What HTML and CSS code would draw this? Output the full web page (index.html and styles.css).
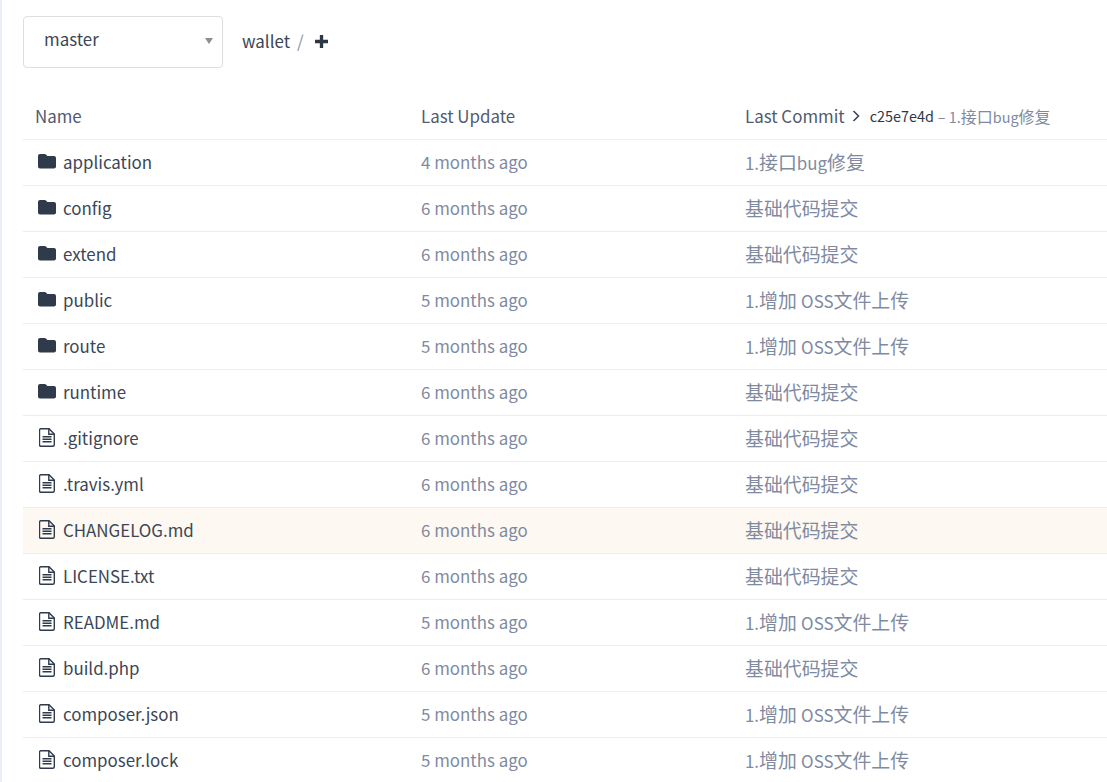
FILE: index.html
```html
<!DOCTYPE html>
<html lang="en">
<head>
<meta charset="utf-8">
<title>wallet</title>
<link rel="stylesheet" href="styles.css">
</head>
<body>
<svg class="sprites" width="0" height="0" aria-hidden="true">
  <symbol id="folder" viewBox="0 0 18 16"><path d="M2 1h4.600c.6 0 1 .2 1.400.6L9.400 3H16c1.100 0 2 .9 2 2v8.500c0 1.100-.9 2-2 2H2c-1.100 0-2-.9-2-2V3c0-1.100.9-2 2-2z"/></symbol>
  <symbol id="file" viewBox="0 0 16 19"><path class="outline" d="M1.800.7h8.200l5.300 5.300v10.800c0 .8-.6 1.500-1.500 1.500H1.800c-.8 0-1.300-.7-1.300-1.500V2.200C.5 1.400 1 .7 1.800.7z"/><path class="outline" d="M9.800.8v5.400h5.400M3.500 8.700h9M3.500 11.200h9M3.500 13.700h9"/></symbol>
</svg>
<main class="page">
  <div class="toolbar">
    <div class="branch"><span>master</span><i class="caret"></i></div>
    <div class="crumb"><span>wallet</span><span class="slash">/</span><svg class="plus" viewBox="0 0 14 14"><path d="M5.200 0h3.600v5.200H14v3.600H8.800V14H5.200V8.800H0V5.200h5.200z"/></svg></div>
  </div>
  <div class="table">
    <div class="row head">
      <div class="c-name head-name">Name</div>
      <div class="c-time head-label">Last Update</div>
      <div class="c-msg head-label commit-head">Last Commit<svg class="chev" viewBox="0 0 8 12"><path d="M1.500 1l5 5-5 5"/></svg><span class="sha">c25e7e4d</span><span class="sha-msg"><span class="lat">– 1.</span>接口<span class="lat">bug</span>修复</span></div>
    </div>
    <div class="row"><div class="c-name"><svg class="ico-folder"><use href="#folder"/></svg>application</div><div class="c-time">4 months ago</div><div class="c-msg"><span class="lat">1.</span>接口<span class="lat">bug</span>修复</div></div>
    <div class="row"><div class="c-name"><svg class="ico-folder"><use href="#folder"/></svg>config</div><div class="c-time">6 months ago</div><div class="c-msg">基础代码提交</div></div>
    <div class="row"><div class="c-name"><svg class="ico-folder"><use href="#folder"/></svg>extend</div><div class="c-time">6 months ago</div><div class="c-msg">基础代码提交</div></div>
    <div class="row"><div class="c-name"><svg class="ico-folder"><use href="#folder"/></svg>public</div><div class="c-time">5 months ago</div><div class="c-msg"><span class="lat">1.</span>增加 <span class="lat">OSS</span>文件上传</div></div>
    <div class="row"><div class="c-name"><svg class="ico-folder"><use href="#folder"/></svg>route</div><div class="c-time">5 months ago</div><div class="c-msg"><span class="lat">1.</span>增加 <span class="lat">OSS</span>文件上传</div></div>
    <div class="row"><div class="c-name"><svg class="ico-folder"><use href="#folder"/></svg>runtime</div><div class="c-time">6 months ago</div><div class="c-msg">基础代码提交</div></div>
    <div class="row"><div class="c-name"><svg class="ico-file"><use href="#file"/></svg>.gitignore</div><div class="c-time">6 months ago</div><div class="c-msg">基础代码提交</div></div>
    <div class="row"><div class="c-name"><svg class="ico-file"><use href="#file"/></svg>.travis.yml</div><div class="c-time">6 months ago</div><div class="c-msg">基础代码提交</div></div>
    <div class="row hover"><div class="c-name"><svg class="ico-file"><use href="#file"/></svg>CHANGELOG.md</div><div class="c-time">6 months ago</div><div class="c-msg">基础代码提交</div></div>
    <div class="row"><div class="c-name"><svg class="ico-file"><use href="#file"/></svg>LICENSE.txt</div><div class="c-time">6 months ago</div><div class="c-msg">基础代码提交</div></div>
    <div class="row"><div class="c-name"><svg class="ico-file"><use href="#file"/></svg>README.md</div><div class="c-time">5 months ago</div><div class="c-msg"><span class="lat">1.</span>增加 <span class="lat">OSS</span>文件上传</div></div>
    <div class="row"><div class="c-name"><svg class="ico-file"><use href="#file"/></svg>build.php</div><div class="c-time">6 months ago</div><div class="c-msg">基础代码提交</div></div>
    <div class="row"><div class="c-name"><svg class="ico-file"><use href="#file"/></svg>composer.json</div><div class="c-time">5 months ago</div><div class="c-msg"><span class="lat">1.</span>增加 <span class="lat">OSS</span>文件上传</div></div>
    <div class="row"><div class="c-name"><svg class="ico-file"><use href="#file"/></svg>composer.lock</div><div class="c-time">5 months ago</div><div class="c-msg"><span class="lat">1.</span>增加 <span class="lat">OSS</span>文件上传</div></div>
  </div>
</main>
</body>
</html>
```
FILE: styles.css
```css
html, body { margin: 0; height: 100%; overflow: hidden; background: #fff; }
body { font-family: "Noto Sans CJK SC", "Noto Sans", sans-serif; font-size: 16.900px; color: #3b4656; }
.sprites { display: block; height: 0; }
.page { border-left: 2px solid #e9eff5; height: 782px; box-sizing: border-box; padding: 16px 0 0 21px; }
.toolbar { display: flex; align-items: center; height: 52px; }
.branch { width: 200px; height: 52px; box-sizing: border-box; border: 1px solid #dcdee2; border-radius: 4px; display: flex; align-items: center; justify-content: space-between; padding: 0 9px 7px 20px; color: #3b4656; }
.caret { width: 0; height: 0; border-left: 4px solid transparent; border-right: 4px solid transparent; border-top: 6px solid #8e8e8e; margin-top: 5px; }
.crumb { display: flex; align-items: center; margin-left: 19px; padding-bottom: 3px; }
.slash { margin-left: 7px; color: #8a94a3; }
.plus { width: 13px; height: 13px; margin: 0 0 -1px 11px; fill: #2d3644; }
.table { margin-top: 25px; width: 1084px; }
.row { display: flex; align-items: center; height: 46px; box-sizing: border-box; border-bottom: 1px solid #ebedf0; padding-bottom: 3px; }
.row.head { height: 47px; padding-bottom: 1px; }
.hover { background: #fdf8f1; }
.c-name { width: 398px; box-sizing: border-box; padding-left: 15px; display: flex; align-items: center; color: #3b4656; }
.c-name.head-name { padding-left: 12px; color: #515a6e; }
.c-time { width: 324px; color: #808a9f; }
.c-msg { flex: 1; color: #808a9f; white-space: nowrap; font-size: 18.900px; }
.lat { font-size: 16.900px; }
.c-time.head-label, .c-msg.head-label { color: #515a6e; font-size: 16.900px; }
.commit-head { display: flex; align-items: center; }
.chev { width: 8px; height: 12px; margin-left: 7px; fill: none; stroke: #3b4656; stroke-width: 1.6; }
.sha { font-size: 14.400px; margin-left: 10px; color: #2f3845; }
.sha-msg { font-size: 16px; margin-left: 4px; color: #808a9f; }
.sha-msg .lat { font-size: 14.400px; }
.ico-folder { width: 18px; height: 16px; margin: 0 7px 0 0; fill: #2f3a4b; flex: none; }
.ico-file { width: 16px; height: 19px; margin: 0 8px 0 1px; flex: none; }
.outline { fill: none; stroke: #2f3a4b; stroke-width: 1.400; }
```
